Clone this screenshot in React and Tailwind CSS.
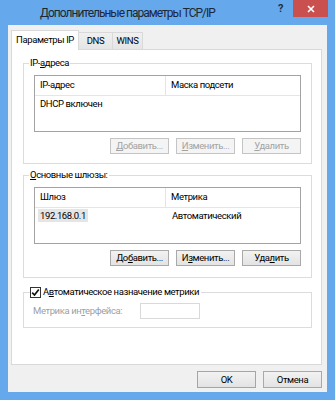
import React from "react";

const disabledBtn =
  "w-[59px] h-[16px] border border-[#c4c4c4] bg-[#f4f4f4] text-[#a3a3a3] flex items-center justify-center leading-none";
const btn =
  "w-[59px] h-[16px] border border-[#a9a9a9] bg-gradient-to-b from-[#f2f2f2] to-[#e3e3e3] text-black flex items-center justify-center leading-none";

function ListView({ cols, rows, selected }) {
  return (
    <div className="ml-[10px] mt-[5px] w-[267px] h-[57px] border border-[#a3a3a3] bg-white">
      <div className="flex h-[20px] border-b border-[#e5e5e5]">
        <div className="w-[131px] border-r border-[#e5e5e5] pl-[5px] flex items-center">
          {cols[0]}
        </div>
        <div className="pl-[5px] flex items-center">{cols[1]}</div>
      </div>
      {rows.map((r, i) => (
        <div key={i} className="flex h-[14px] mt-[1px] items-center">
          <div className="w-[132px] pl-[3px]">
            <span
              className={
                selected ? "bg-[#e5e5e5] px-[2px] py-[1px]" : "px-[2px]"
              }
            >
              {r[0]}
            </span>
          </div>
          <div className="pl-[5px]">{r[1]}</div>
        </div>
      ))}
    </div>
  );
}

function Buttons({ enabled, labels }) {
  const cls = enabled ? btn : disabledBtn;
  return (
    <div className="flex justify-end gap-[7px] mt-[6px] w-[277px]">
      {labels.map((l, i) => (
        <div key={i} className={cls}>
          <span>{l}</span>
        </div>
      ))}
    </div>
  );
}

export default function App() {
  return (
    <div className="w-[335px] h-[400px] bg-[#65a8ec] flex flex-col text-[9.5px] tracking-[-0.4px] text-black font-['Roboto',sans-serif] whitespace-nowrap">
      {/* title bar */}
      <div className="h-[25px] flex items-start shrink-0">
        <div className="shrink-0 pl-[40px] pt-[4px] text-[12px] tracking-[-1px] leading-[18px] text-[#1d2733]">
          Дополнительные параметры TCP/IP
        </div>
        <div className="ml-auto mt-[2px] mr-[10px] text-[11px] font-bold text-[#24303c] leading-[14px]">
          ?
        </div>
        <div className="w-[35px] h-[17px] bg-[#c9504f] mr-[7px] flex items-center justify-center">
          <svg width="8" height="8" viewBox="0 0 8 8">
            <path d="M1 1 L7 7 M7 1 L1 7" stroke="white" strokeWidth="1.6" />
          </svg>
        </div>
      </div>

      {/* client */}
      <div className="flex-1 mx-[8px] mb-[8px] bg-[#f0f0f0] flex flex-col">
        {/* tabs */}
        <div className="flex items-end h-[19px] mt-[5px] ml-[3px]">
          <div className="relative z-10 h-[20px] -mb-px w-[68px] bg-white border-x border-t border-[#d9d9d9] flex items-center justify-center pb-[1px]">
            Параметры IP
          </div>
          <div className="h-[17px] w-[35px] -ml-px bg-gradient-to-b from-[#f0f0f0] to-[#e5e5e5] border-x border-t border-[#d9d9d9] flex items-center justify-center">
            DNS
          </div>
          <div className="h-[17px] w-[31px] -ml-px bg-gradient-to-b from-[#f0f0f0] to-[#e5e5e5] border-x border-t border-[#d9d9d9] flex items-center justify-center">
            WINS
          </div>
        </div>

        {/* tab page */}
        <div className="ml-[3px] w-[311px] h-[316px] border border-[#d9d9d9] bg-white">
          <fieldset className="ml-[11px] mt-[6px] w-[289px] border border-[#dcdcdc] pb-[9px]">
            <legend className="ml-[5px] px-[1px] leading-[14px]">
              IP-<u>а</u>дреса
            </legend>
            <ListView
              cols={["IP-адрес", "Маска подсети"]}
              rows={[["DHCP включен", ""]]}
            />
            <Buttons
              labels={[
                <>
                  <u>Д</u>обавить...
                </>,
                <>
                  <u>И</u>зменить...
                </>,
                <>
                  <u>У</u>далить
                </>,
              ]}
            />
          </fieldset>

          <fieldset className="ml-[11px] mt-[4px] w-[289px] border border-[#dcdcdc] pb-[11px]">
            <legend className="ml-[5px] px-[1px] leading-[14px]">
              <u>О</u>сновные шлюзы:
            </legend>
            <ListView
              cols={["Шлюз", "Метрика"]}
              rows={[["192.168.0.1", "Автоматический"]]}
              selected
            />
            <Buttons
              enabled
              labels={[
                <>
                  До<u>б</u>авить...
                </>,
                <>
                  И<u>з</u>менить...
                </>,
                <>
                  Уда<u>л</u>ить
                </>,
              ]}
            />
          </fieldset>

          <fieldset className="ml-[11px] mt-[7px] w-[289px] border border-[#dcdcdc] pb-[8px]">
            <legend className="ml-[6px] pr-[2px] leading-[14px]">
              <span className="flex items-center gap-[2px]">
                <span className="w-[11px] h-[11px] border border-[#333] bg-white flex items-center justify-center">
                  <svg width="9" height="9" viewBox="0 0 9 9">
                    <path
                      d="M1.2 4.6 L3.5 7 L7.8 1.5"
                      fill="none"
                      stroke="#111"
                      strokeWidth="1.7"
                    />
                  </svg>
                </span>
                <span>
                  А<u>в</u>томатическое назначение метрики
                </span>
              </span>
            </legend>
            <div className="flex items-center mt-[4px] ml-[9px]">
              <div className="w-[107px] text-[#a0a0a0]">
                Метрика ин<u>т</u>ерфейса:
              </div>
              <div className="w-[60px] h-[16px] border border-[#d9d9d9] bg-white" />
            </div>
          </fieldset>
        </div>

        {/* dialog buttons */}
        <div className="flex justify-end gap-[7px] mt-[6px] pr-[5px]">
          <div className="w-[59px] h-[17px] border border-[#79aee6] bg-gradient-to-b from-[#f2f2f2] to-[#e3e3e3] flex items-center justify-center leading-none">
            OK
          </div>
          <div className="w-[59px] h-[17px] border border-[#a9a9a9] bg-gradient-to-b from-[#f2f2f2] to-[#e3e3e3] flex items-center justify-center leading-none">
            Отмена
          </div>
        </div>
      </div>
    </div>
  );
}
